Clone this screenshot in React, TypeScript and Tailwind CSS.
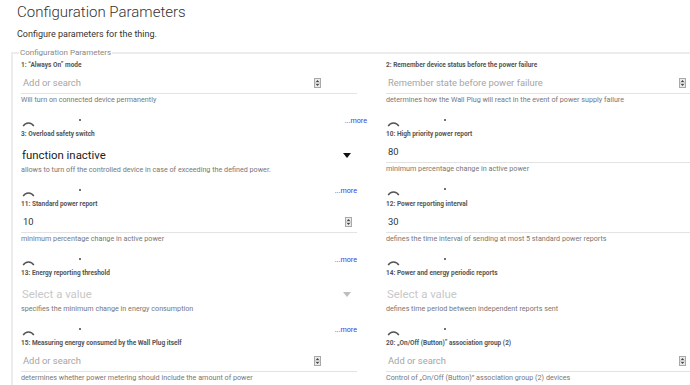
type Field = {
  label: string;
  kind: "auto" | "number" | "select";
  value?: string;
  placeholder?: string;
  help: string;
  footer?: boolean;
  more?: boolean;
  moreShift?: boolean;
};

const left: Field[] = [
  { label: "1: “Always On” mode", kind: "auto", placeholder: "Add or search", help: "Will turn on connected device permanently", footer: true, more: true, moreShift: true },
  { label: "3: Overload safety switch", kind: "select", value: "function inactive", help: "allows to turn off the controlled device in case of exceeding the defined power.", footer: true, more: true },
  { label: "11: Standard power report", kind: "number", value: "10", help: "minimum percentage change in active power", footer: true, more: true },
  { label: "13: Energy reporting threshold", kind: "select", placeholder: "Select a value", help: "specifies the minimum change in energy consumption", footer: true, more: true },
  { label: "15: Measuring energy consumed by the Wall Plug itself", kind: "auto", placeholder: "Add or search", help: "determines whether power metering should include the amount of power" },
];

// right column runs past the window edge, its "...more" links are out of view
const right: Field[] = [
  { label: "2: Remember device status before the power failure", kind: "auto", placeholder: "Remember state before power failure", help: "determines how the Wall Plug will react in the event of power supply failure", footer: true },
  { label: "10: High priority power report", kind: "number", value: "80", help: "minimum percentage change in active power", footer: true },
  { label: "12: Power reporting interval", kind: "number", value: "30", help: "defines the time interval of sending at most 5 standard power reports", footer: true },
  { label: "14: Power and energy periodic reports", kind: "select", placeholder: "Select a value", help: "defines time period between independent reports sent", footer: true },
  { label: "20: „On/Off (Button)” association group (2)", kind: "auto", placeholder: "Add or search", help: "Control of „On/Off (Button)” association group (2) devices" },
];

function Stepper() {
  return (
    <svg width="7" height="10" viewBox="0 0 7 10" className="shrink-0">
      <rect x="0.5" y="0.5" width="6" height="9" fill="#ebebeb" stroke="#a8a8a8" />
      <line x1="0.5" y1="5" x2="6.5" y2="5" stroke="#b5b5b5" />
      <path d="M3.5 1.9 L5.2 3.9 H1.8Z" fill="#444" />
      <path d="M3.5 8.1 L5.2 6.1 H1.8Z" fill="#444" />
    </svg>
  );
}

function Arrow({ light }: { light: boolean }) {
  return (
    <svg width="8" height="5" viewBox="0 0 8 5" className="shrink-0">
      <path d="M0 0 H8 L4 5Z" fill={light ? "#bdbdbd" : "#111"} />
    </svg>
  );
}

function Item({ f }: { f: Field }) {
  return (
    <div className="flex flex-col">
      <div className="h-[9px] text-[6.5px] leading-[9px] font-bold text-[#555] whitespace-nowrap">{f.label}</div>

      {f.kind === "select" ? (
        <div className="h-[25px] flex items-end pb-[2px]">
          <div className="flex items-center w-full pl-[1px]">
            <span className={f.value ? "flex-1 text-[11.4px] leading-[13px] text-[#222]" : "flex-1 text-[11.4px] leading-[13px] text-[#c8c8c8]"}>
              {f.value ?? f.placeholder}
            </span>
            <span className="mr-[6px]">
              <Arrow light={!f.value} />
            </span>
          </div>
        </div>
      ) : (
        <div className="h-[24px] flex items-end pb-[4px] pl-[2px] border-b border-[#e3e3e3]">
          <span className={f.value ? "flex-1 text-[9.4px] leading-[12px] text-[#333] whitespace-nowrap" : "flex-1 text-[9.4px] leading-[12px] text-[#a5a5a5] whitespace-nowrap"}>
            {f.value ?? f.placeholder}
          </span>
          <span className={f.kind === "auto" ? "mr-[36px] mb-[1px]" : "mr-[5px] mb-[1px]"}>
            <Stepper />
          </span>
        </div>
      )}

      <div className="h-[11px] text-[7.2px] leading-[11px] text-[#777] whitespace-nowrap">{f.help}</div>

      {f.footer && (
        <div className="h-[25px] flex items-center pt-[6px]">
          <svg width="13" height="6" viewBox="0 0 13 6" className="ml-[1px] mt-[6px] shrink-0">
            <path d="M1.2 5.2 A6 6 0 0 1 11.8 5.2" fill="none" stroke="#555" strokeWidth="1.4" />
          </svg>
          <span className="ml-[44px] mt-[-1px] w-[1.5px] h-[1.5px] rounded-full bg-[#444]" />
          {f.more && (
            <span className={f.moreShift ? "ml-auto mr-[-10px] text-[7.2px] leading-[9px] text-[#3b3be0]" : "ml-auto text-[7.2px] leading-[9px] text-[#3b3be0]"}>
              ...more
            </span>
          )}
        </div>
      )}
    </div>
  );
}

export default function App() {
  return (
    <div className="w-[690px] h-[385px] overflow-hidden bg-white font-['Roboto',sans-serif]">
      <div className="pl-[17px] pt-[2px]">
        <h1 className="text-[15px] leading-[20px] font-light text-[#333]">Configuration Parameters</h1>
        <p className="mt-[6px] text-[9px] leading-[12px] text-[#333]">Configure parameters for the thing.</p>
      </div>

      <fieldset className="mt-[8px] ml-[11px] w-[760px] border-2 border-[#ececec] pl-[8px] pb-4">
        <legend className="ml-[-2px] px-[1px] text-[8px] leading-[10px] text-[#888]">Configuration Parameters</legend>

        <div className="pt-[3px] grid grid-cols-[336px_336px] gap-x-[29px]">
          {left.map((f, i) => (
            <div key={i} className="contents">
              <Item f={f} />
              <Item f={right[i]} />
            </div>
          ))}
        </div>
      </fieldset>
    </div>
  );
}
